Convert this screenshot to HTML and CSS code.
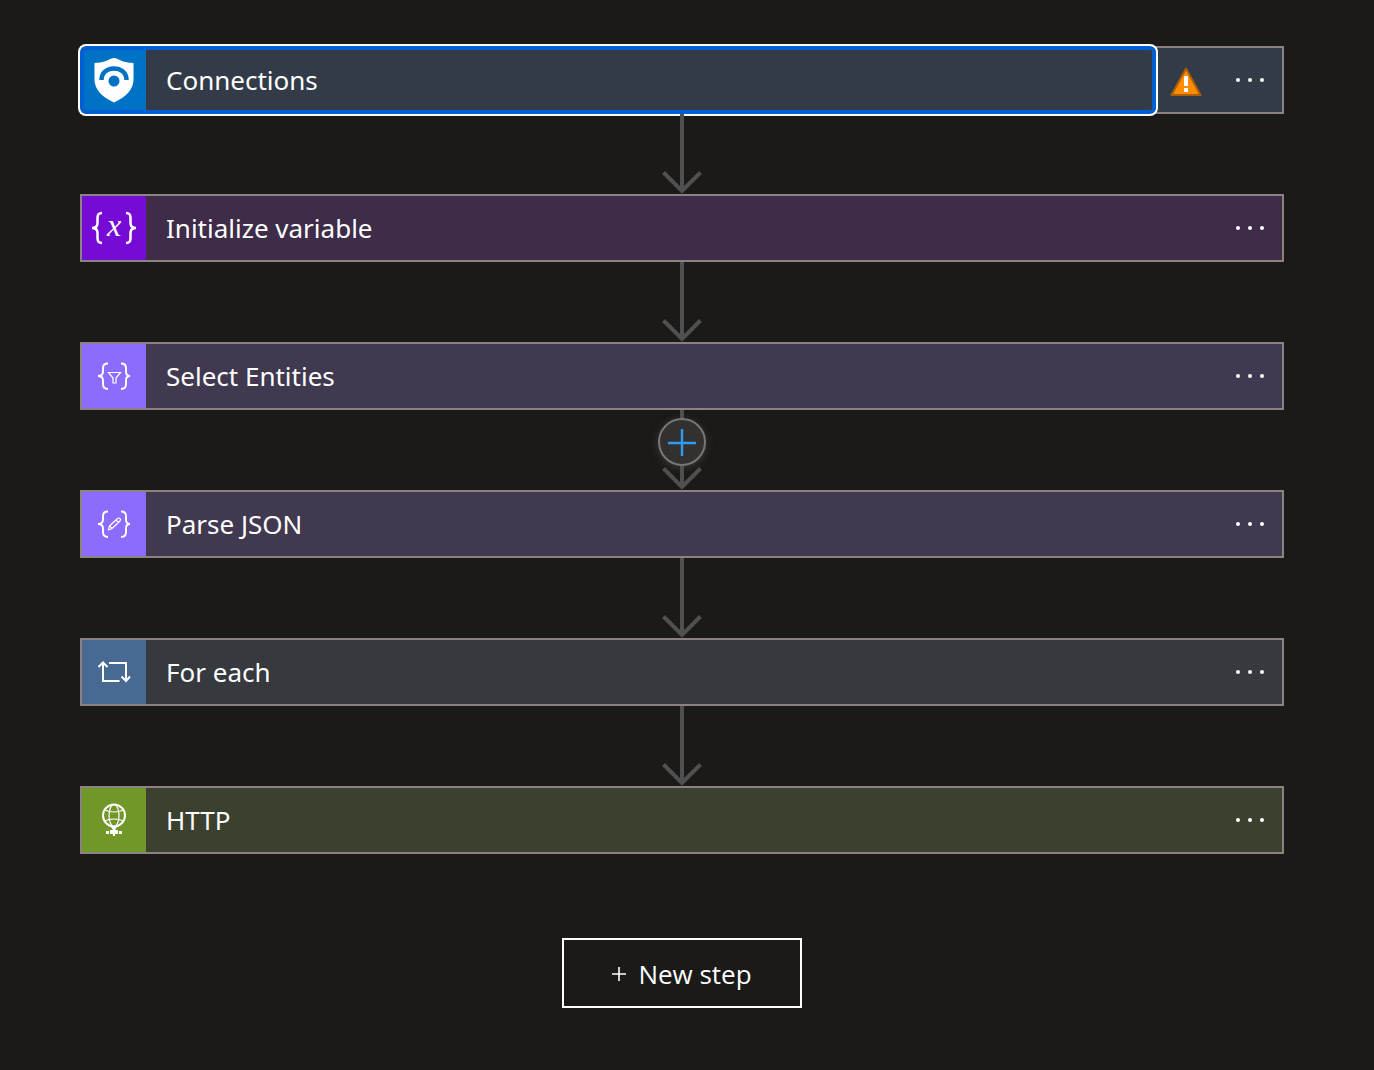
FILE: index.html
```html
<!DOCTYPE html>
<html lang="en">
<head>
<meta charset="utf-8">
<meta name="viewport" content="width=device-width, initial-scale=1">
<title>Logic app designer</title>
<link rel="stylesheet" href="styles.css">
</head>
<body>
<svg class="defs" aria-hidden="true">
  <symbol id="dots" viewBox="0 0 32 32"><circle cx="4" cy="16" r="2"/><circle cx="16" cy="16" r="2"/><circle cx="28" cy="16" r="2"/></symbol>
  <symbol id="arrow" viewBox="0 0 40 80"><path d="M20 0V76M1.500 58.500L20 77L38.500 58.500" fill="none" stroke="#505050" stroke-width="4"/></symbol>
  <symbol id="braces" viewBox="0 0 64 64"><path d="M26 19.500C22.500 19.500 21 21 21 24V27.500C21 30.500 19.500 32 16 32C19.500 32 21 33.500 21 36.500V40C21 43 22.500 45 26 45M39 19.500C42.500 19.500 44 21 44 24V27.500C44 30.500 45.500 32 48 32C45.500 32 44 33.500 44 36.500V40C44 43 42.500 45 39 45" fill="none" stroke="#fff" stroke-width="1.900"/></symbol>
</svg>
<main class="designer">
  <ol class="flow">
    <li class="step">
      <article class="card card-connections">
        <button class="card-head is-focused" type="button">
          <svg class="icon" viewBox="0 0 64 64" aria-hidden="true"><path d="M32 10C27.500 10 26 14.500 12.500 15V31C12.500 42 20 49 32 54.500C44 49 51.500 42 51.500 31V15C38 14.500 36.500 10 32 10Z" fill="#fff"/><path d="M19.500 32C19.500 16.500 44.500 16.500 44.500 32" fill="none" stroke="#0072c6" stroke-width="4.500"/><circle cx="32" cy="33" r="5.500" fill="#0072c6"/></svg>
          <span class="title">Connections</span>
        </button>
        <svg class="warning" viewBox="0 0 64 64" role="img" aria-label="Warning"><path d="M32 20.500L46.500 47H17.500Z" fill="#ff8c00" stroke="#ab5d08" stroke-width="2" stroke-linejoin="round"/><path d="M32 28V38M32 40V44" stroke="#fff" stroke-width="4"/></svg>
        <button class="menu" type="button" aria-label="Connections menu"><svg viewBox="0 0 32 32"><use href="#dots"/></svg></button>
      </article>
      <div class="connector"><svg class="arrow" viewBox="0 0 40 80"><use href="#arrow"/></svg></div>
    </li>
    <li class="step">
      <article class="card card-variable">
        <button class="card-head" type="button">
          <svg class="icon" viewBox="0 0 64 64" aria-hidden="true"><path d="M20 17C16.500 17 15.500 18.500 15.500 22V27C15.500 30.500 14 32 10 32C14 32 15.500 33.500 15.500 37V42C15.500 45.500 16.500 47 20 47M44 17C47.500 17 48.500 18.500 48.500 22V27C48.500 30.500 50 32 54 32C50 32 48.500 33.500 48.500 37V42C48.500 45.500 47.500 47 44 47" fill="none" stroke="#fff" stroke-width="2.500"/><text class="glyph" x="32" y="40" text-anchor="middle">x</text></svg>
          <span class="title">Initialize variable</span>
        </button>
        <button class="menu" type="button" aria-label="Initialize variable menu"><svg viewBox="0 0 32 32"><use href="#dots"/></svg></button>
      </article>
      <div class="connector"><svg class="arrow" viewBox="0 0 40 80"><use href="#arrow"/></svg></div>
    </li>
    <li class="step">
      <article class="card card-data">
        <button class="card-head" type="button">
          <svg class="icon" viewBox="0 0 64 64" aria-hidden="true"><use href="#braces"/><path d="M26.500 28.500H38.500L34 34V39H31V34Z" fill="none" stroke="#fff" stroke-width="1.200"/></svg>
          <span class="title">Select Entities</span>
        </button>
        <button class="menu" type="button" aria-label="Select Entities menu"><svg viewBox="0 0 32 32"><use href="#dots"/></svg></button>
      </article>
      <div class="connector">
        <svg class="arrow" viewBox="0 0 40 80"><use href="#arrow"/></svg>
        <button class="insert" type="button" aria-label="Insert a step"><svg viewBox="0 0 28 28"><path d="M14 1V28M0 15H28" stroke="#2f9df4" stroke-width="2.400"/></svg></button>
      </div>
    </li>
    <li class="step">
      <article class="card card-data">
        <button class="card-head" type="button">
          <svg class="icon" viewBox="0 0 64 64" aria-hidden="true"><use href="#braces"/><path d="M26.500 38L27.500 34L35.500 26.500Q37 25.500 38 26.500Q39 27.500 38 29L30 36.500ZM34 28L36.500 30.500M28 34L30 36.500" fill="none" stroke="#fff" stroke-width="1.200" stroke-linejoin="round"/></svg>
          <span class="title">Parse JSON</span>
        </button>
        <button class="menu" type="button" aria-label="Parse JSON menu"><svg viewBox="0 0 32 32"><use href="#dots"/></svg></button>
      </article>
      <div class="connector"><svg class="arrow" viewBox="0 0 40 80"><use href="#arrow"/></svg></div>
    </li>
    <li class="step">
      <article class="card card-loop">
        <button class="card-head" type="button">
          <svg class="icon" viewBox="0 0 64 64" aria-hidden="true"><path d="M37.500 41H21V23M16.500 27L21 22.500L25.500 27M27 23H44V41M39.500 36.500L44 41L48 36.500" fill="none" stroke="#fff" stroke-width="2"/></svg>
          <span class="title">For each</span>
        </button>
        <button class="menu" type="button" aria-label="For each menu"><svg viewBox="0 0 32 32"><use href="#dots"/></svg></button>
      </article>
      <div class="connector"><svg class="arrow" viewBox="0 0 40 80"><use href="#arrow"/></svg></div>
    </li>
    <li class="step">
      <article class="card card-http">
        <button class="card-head" type="button">
          <svg class="icon" viewBox="0 0 64 64" aria-hidden="true"><g fill="none" stroke="#fff"><circle cx="32" cy="27.500" r="11" stroke-width="2"/><ellipse cx="32" cy="27.500" rx="5" ry="11" stroke-width="1.200"/><path d="M22.500 22Q32 26 41.500 22M22.500 33Q32 29 41.500 33" stroke-width="1.200"/></g><path d="M29 39H35L33 42H36V46H33V48H31V46H28V42H31ZM24 43H27V46H24ZM37 43H40V46H37Z" fill="#fff"/></svg>
          <span class="title">HTTP</span>
        </button>
        <button class="menu" type="button" aria-label="HTTP menu"><svg viewBox="0 0 32 32"><use href="#dots"/></svg></button>
      </article>
    </li>
  </ol>
  <button class="new-step" type="button"><svg viewBox="0 0 14 14" aria-hidden="true"><path d="M7 0V14M0 7H14" stroke="#fff" stroke-width="1.600"/></svg>New step</button>
</main>
</body>
</html>
```
FILE: styles.css
```css
* { box-sizing: border-box; }

body {
  margin: 0;
  background: #1b1a19;
  color: #fff;
  font-family: "Noto Sans", "Open Sans", sans-serif;
}

button {
  padding: 0;
  border: 0;
  background: none;
  color: inherit;
  font: inherit;
  cursor: pointer;
}

.defs {
  display: none;
}

.designer {
  display: flex;
  flex-direction: column;
  align-items: center;
  gap: 84px;
  padding: 46px 90px 62px 80px;
}

.flow {
  width: 100%;
  margin: 0;
  padding: 0;
  list-style: none;
}

.card {
  display: flex;
  height: 68px;
  border: 2px solid #8a8381;
}

.card-head {
  position: relative;
  display: flex;
  flex: 1;
  align-items: center;
  gap: 20px;
  min-width: 0;
  outline: none;
  text-align: left;
}

.is-focused::after {
  content: "";
  position: absolute;
  inset: -4px;
  border: 2px solid #fff;
  border-radius: 8px;
  box-shadow: inset 0 0 0 4px #005fd1;
}

.icon {
  flex: none;
  width: 64px;
  height: 64px;
}

.glyph {
  fill: #fff;
  font: italic 32px "Liberation Serif", serif;
}

.title {
  font-size: 26px;
  line-height: 36px;
}

.warning {
  flex: none;
  width: 64px;
  height: 64px;
}

.menu {
  display: grid;
  flex: none;
  place-items: center;
  width: 64px;
  fill: #fff;
}

.menu svg {
  width: 32px;
  height: 32px;
}

.card-connections { background: #323b47; }
.card-connections .icon { background: #0072c6; }
.card-variable { background: #3e2c49; }
.card-variable .icon { background: #770bd6; }
.card-data { background: #40394f; }
.card-data .icon { background: #8c6cff; }
.card-loop { background: #36393e; }
.card-loop .icon { background: #486991; }
.card-http { background: #3c402f; }
.card-http .icon { background: #709727; }

.connector {
  position: relative;
  display: flex;
  justify-content: center;
  height: 80px;
}

.arrow {
  width: 40px;
  height: 80px;
}

.insert {
  position: absolute;
  top: 8px;
  left: 50%;
  display: grid;
  place-items: center;
  width: 48px;
  height: 48px;
  margin-left: -24px;
  border: 2px solid #797775;
  border-radius: 50%;
  background: #323130;
  box-shadow: 0 2px 8px #55555580;
}

.insert svg {
  width: 28px;
  height: 28px;
}

.new-step {
  display: flex;
  align-items: center;
  justify-content: center;
  gap: 12px;
  width: 240px;
  height: 70px;
  padding-top: 2px;
  border: 2px solid #fff;
  font-family: "Open Sans", "Noto Sans", sans-serif;
  font-size: 26px;
  line-height: 36px;
}

.new-step svg {
  width: 14px;
  height: 14px;
}
```
